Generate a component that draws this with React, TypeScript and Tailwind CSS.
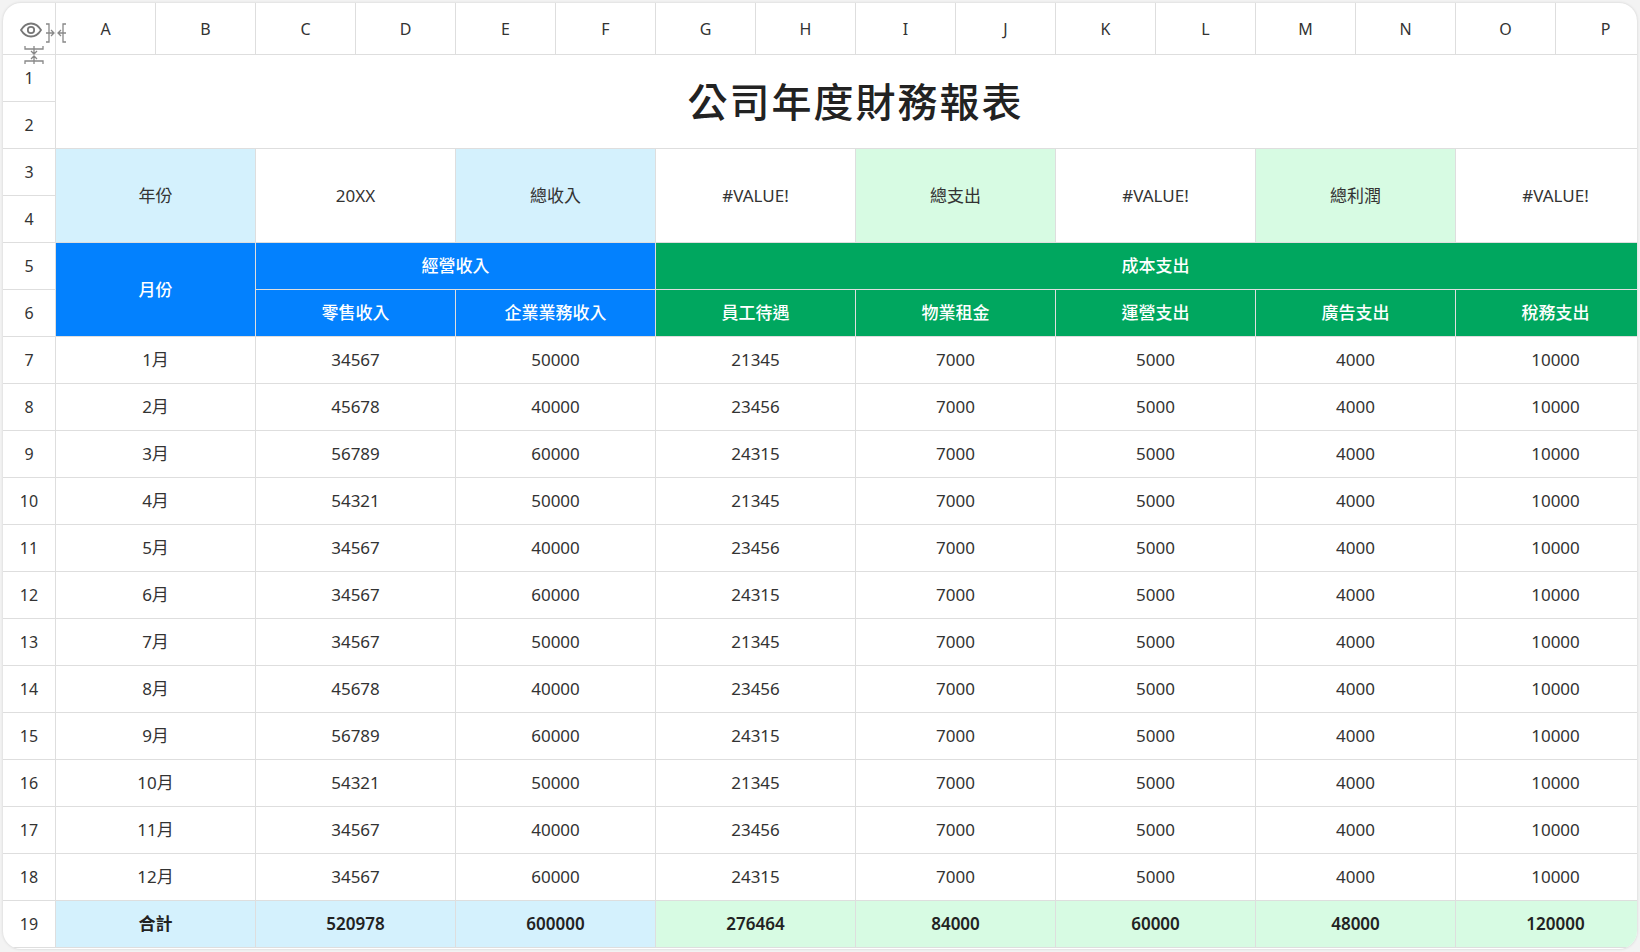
import React from "react";

const cols = "ABCDEFGHIJKLMNOP".split("");
const months = ["1月","2月","3月","4月","5月","6月","7月","8月","9月","10月","11月","12月"];
const data = [
  [34567,50000,21345],[45678,40000,23456],[56789,60000,24315],[54321,50000,21345],
  [34567,40000,23456],[34567,60000,24315],[34567,50000,21345],[45678,40000,23456],
  [56789,60000,24315],[54321,50000,21345],[34567,40000,23456],[34567,60000,24315],
];
const B = "border-r border-b border-[#dedede]";
const C = "flex items-center justify-center";

function Cell({ r, c, rs = 1, cs = 2, cls = "", children }: any) {
  return (
    <div className={`${B} ${C} ${cls}`} style={{ gridRow: `${r} / span ${rs}`, gridColumn: `${c} / span ${cs}` }}>
      {children}
    </div>
  );
}

export default function App() {
  const F = { fontFamily: '"Noto Sans","Noto Sans CJK TC",sans-serif' };
  return (
    <div className="w-[1640px] h-[952px] bg-[#f3f3f3] p-[3px] overflow-hidden" style={F}>
      <div className="w-[1634px] h-[946px] bg-white rounded-[18px] overflow-hidden shadow-[0_0_3px_rgba(0,0,0,0.15)]">
        <div className="grid grid-cols-[53px_repeat(16,100px)] grid-rows-[52px_repeat(19,47px)] text-[17px] text-[#333]">
          <div className={`${B} relative`} style={{ gridRow: 1, gridColumn: 1 }}>
            <svg className="absolute left-[17px] top-[19px]" width="22" height="16" viewBox="0 0 22 16" fill="none" stroke="#777" strokeWidth="1.8">
              <path d="M1 8C4 3 7.5 1.5 11 1.5S18 3 21 8c-3 5-6.5 6.5-10 6.5S4 13 1 8z" />
              <circle cx="11" cy="8" r="3.2" />
            </svg>
            <svg className="absolute left-[42px] top-[19px]" width="22" height="24" viewBox="0 0 22 24" fill="none" stroke="#888" strokeWidth="1.3">
              <path d="M1 2h3v18H1M21 2h-3v18h3M1 11h8M6 8l3 3-3 3M21 11h-8M16 8l-3 3 3 3" />
            </svg>
            <svg className="absolute left-[21px] top-[42px]" width="20" height="20" viewBox="0 0 20 20" fill="none" stroke="#888" strokeWidth="1.3">
              <path d="M1 1v3h18V1M1 19v-3h18v3M10 1v8M7 6l3 3 3-3M10 19v-8M7 14l3-3 3 3" />
            </svg>
          </div>
          {cols.map((c, i) => (
            <div key={c} className={`${B} ${C} text-[16px] text-[#333]`} style={{ gridRow: 1, gridColumn: i + 2 }}>{c}</div>
          ))}
          {Array.from({ length: 19 }, (_, i) => (
            <div key={i} className={`${B} ${C} text-[16px] text-[#333]`} style={{ gridRow: i + 2, gridColumn: 1 }}>{i + 1}</div>
          ))}
          <Cell r={2} c={2} rs={2} cs={16} cls="text-[40px] font-medium text-[#222] tracking-wider">公司年度財務報表</Cell>
          <Cell r={4} c={2} rs={2} cls="bg-[#d4f1fd]">年份</Cell>
          <Cell r={4} c={4} rs={2}>20XX</Cell>
          <Cell r={4} c={6} rs={2} cls="bg-[#d4f1fd]">總收入</Cell>
          <Cell r={4} c={8} rs={2}>#VALUE!</Cell>
          <Cell r={4} c={10} rs={2} cls="bg-[#d7fbe3]">總支出</Cell>
          <Cell r={4} c={12} rs={2}>#VALUE!</Cell>
          <Cell r={4} c={14} rs={2} cls="bg-[#d7fbe3]">總利潤</Cell>
          <Cell r={4} c={16} rs={2}>#VALUE!</Cell>
          <Cell r={6} c={2} rs={2} cls="bg-[#0381fe] text-white font-medium border-[#c8d8ea]">月份</Cell>
          <Cell r={6} c={4} cs={4} cls="bg-[#0381fe] text-white font-medium border-[#c8d8ea]">經營收入</Cell>
          <Cell r={6} c={8} cs={10} cls="bg-[#00a75f] text-white font-medium border-[#c8e4d4]">成本支出</Cell>
          {["零售收入","企業業務收入"].map((t, i) => (
            <Cell key={t} r={7} c={4 + i * 2} cls="bg-[#0381fe] text-white font-medium border-[#c8d8ea]">{t}</Cell>
          ))}
          {["員工待遇","物業租金","運營支出","廣告支出","稅務支出"].map((t, i) => (
            <Cell key={t} r={7} c={8 + i * 2} cls="bg-[#00a75f] text-white font-medium border-[#c8e4d4]">{t}</Cell>
          ))}
          {data.map((d, i) => {
            const vals = [months[i], d[0], d[1], d[2], 7000, 5000, 4000, 10000];
            return vals.map((v, j) => (
              <Cell key={`${i}-${j}`} r={8 + i} c={2 + j * 2}>{v}</Cell>
            ));
          })}
          {["合計","520978","600000","276464","84000","60000","48000","120000"].map((v, j) => (
            <Cell key={v} r={20} c={2 + j * 2} cls={`font-semibold text-[#222] ${j < 3 ? "bg-[#d4f1fd]" : "bg-[#d7fbe3]"}`}>{v}</Cell>
          ))}
        </div>
      </div>
    </div>
  );
}
